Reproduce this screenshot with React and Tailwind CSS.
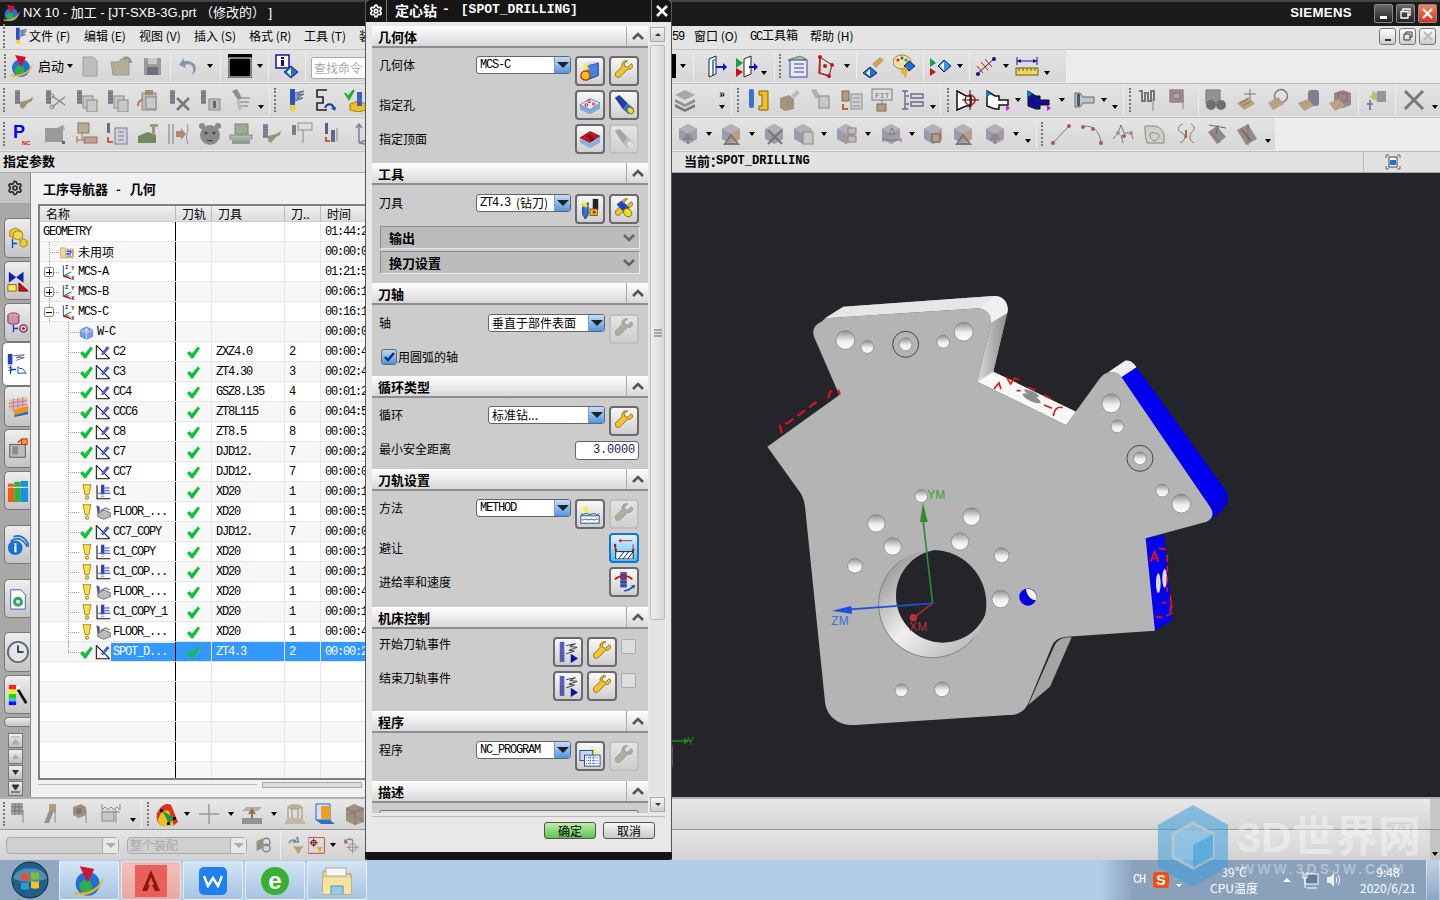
import React from 'react';
import { Settings } from 'lucide-react';

// column with flutes, used by most of the NX operation icons
const Flute = ({ x = 3, y = 2, h = 14, c = '#8d8da0' }) => (
  <g>
    <rect x={x} y={y} width="5" height={h} fill={c} />
    <path d={`M${x} ${y + 3}h5M${x} ${y + 6}h5M${x} ${y + 9}h5M${x} ${y + 12}h5`} stroke="#55556a" strokeWidth=".8" />
  </g>
);
const GrayDoc = ({ x = 12, y = 10 }) => (
  <g>
    <rect x={x} y={y} width="10" height="12" fill="#c8c8c8" stroke="#888" />
    <path d={`M${x + 2} ${y + 3}h6M${x + 2} ${y + 6}h6M${x + 2} ${y + 9}h6`} stroke="#888" />
  </g>
);
const Tree = ({ x = 12, y = 8, c = '#888' }) => (
  <g stroke={c} fill="#c4c4c4">
    <path d={`M${x} ${y}v13M${x} ${y + 5}h4M${x} ${y + 12}h4`} fill="none" />
    <rect x={x + 4} y={y + 3} width="4" height="4" />
    <rect x={x + 4} y={y + 10} width="4" height="4" />
  </g>
);
const GCube = ({ c = '#a59aa5' }) => (
  <g>
    <path d="M12 2l9 5v10l-9 5-9-5V7z" fill="#9b9ba8" />
    <path d="M12 12l9-5v10l-9 5z" fill={c} />
    <path d="M3 7l9 5 9-5-9-5z" fill="#b4aebd" />
  </g>
);
const WrenchPath = 'M20 4l-4 4-3-1-1-3 4-3c-4-1-7 2-6 6L3 14c-1 2 0 5 2 5s3-1 4-2l7-7c4 1 7-3 4-6z';

const icons = {
  nx: <><circle cx="11" cy="14" r="9" fill="#1f6fd6" /><path d="M5 14c3-4 8-4 9 1s-2 7-4 7-6-3-5-8z" fill="#2fae4a" /><path d="M5 1l11 2-5 10z" fill="#d3122c" /><path d="M1 20c8 3 18-2 22-11-1 7-8 16-22 13z" fill="#f0b020" /></>,
  doc: <path d="M5 3h10l4 4v15H5z" fill="#bdbdbd" stroke="#a0a0a0" />,
  folder: <><path d="M2 8h8l2-3h8v16H4z" fill="#b4ad98" stroke="#999" /><path d="M14 4c4-1 7 0 8 4l-3 0" stroke="#8aa07a" strokeWidth="2" fill="none" /></>,
  save: <><rect x="4" y="4" width="17" height="17" fill="#9a9a9a" /><rect x="8" y="4" width="9" height="6" fill="#c8c8c8" /><rect x="7" y="13" width="11" height="8" fill="#6f6f7f" /></>,
  undo: <path d="M7 4L2 11l7 3-1-3c5-2 9 0 8 7l-1 3c6-4 6-15-8-14z" fill="#7f97ad" />,
  colorBox: <><rect x="0" y="0" width="24" height="24" fill="#000" /><rect x="1" y="4" width="22" height="19" fill="#000" stroke="#fff" /></>,
  infoDia: <><rect x="1" y="1" width="13" height="13" fill="#fff" stroke="#1010a0" strokeWidth="1.5" /><rect x="6" y="3" width="3" height="2" fill="#1010a0" /><rect x="6" y="6" width="3" height="6" fill="#1010a0" /><path d="M16 12l7 6-7 6-7-6z" fill="#1f6fd6" stroke="#0a2a70" /><path d="M16 14l-4 4 4 4z" fill="#fff" /></>,
  colW: <><Flute /><path d="M8 14l8-2 5-3-1 4-4 2-5 6-3-2z" fill="#9a927a" /></>,
  colS: <><Flute /><path d="M9 8l13 9M9 19l13-10" stroke="#888" strokeWidth="1.5" /><circle cx="9" cy="8" r="2" fill="none" stroke="#888" /><circle cx="9" cy="19" r="2" fill="none" stroke="#888" /></>,
  colC: <><Flute /><GrayDoc x="9" y="8" /><GrayDoc x="13" y="12" /></>,
  clip: <><rect x="6" y="5" width="14" height="17" fill="#c4bca8" stroke="#888" /><rect x="9" y="2" width="8" height="5" fill="#9d8a70" /><GrayDoc x="10" y="9" /><path d="M2 18c0-4 2-6 5-6" stroke="#c07060" strokeWidth="2" fill="none" /></>,
  colX: <><Flute /><path d="M10 10l12 12M22 10L10 22" stroke="#777" strokeWidth="2.5" /></>,
  colI: <><Flute /><rect x="11" y="11" width="11" height="11" fill="#bbb" stroke="#888" /><rect x="15" y="13" width="3" height="7" fill="#666" /></>,
  torch: <><path d="M3 3l5-2 5 9-4 2z" fill="#8d8da0" /><path d="M11 10h10M11 14h9M11 18h8" stroke="#999" strokeWidth="1.5" /><path d="M9 12l2 10" stroke="#bbb" strokeWidth="3" /></>,
  colBlue: <><Flute x="8" y="1" h="16" c="#2a50c8" /><path d="M13 5l9-2-7 4 7-1-7 4 6 0-8 3" stroke="#5a6a90" fill="#90a0c0" /><path d="M7 21l4-4 4 4-4 2z" fill="#ffd020" /></>,
  sPath: <><path d="M14 2H4v7h6v6H4v7h10" fill="none" stroke="#222" strokeWidth="1.6" /><path d="M12 20c2-5 7-5 9 0" stroke="#1040a0" strokeWidth="2" fill="none" /><path d="M18 20l5-1-1 4z" fill="#1040a0" /></>,
  checkBox: <><path d="M6 16l8-3 8 3v6l-8 2-8-2z" fill="#f0c020" stroke="#a08010" /><Flute x="13" y="4" h="14" c="#4060c0" /><path d="M1 5l3 4 6-7-5 9z" stroke="#20b030" strokeWidth="2" fill="none" /></>,
  pnc: <><text x="1" y="16" fontFamily="Liberation Sans" fontWeight="700" fontSize="18" fill="#0000ff">P</text><text x="10" y="23" fontFamily="Liberation Sans" fontWeight="700" fontSize="6" fill="#e01010">NC</text></>,
  gMail: <><rect x="2" y="6" width="18" height="14" fill="#9a9a9a" /><path d="M14 6l6-3 2 4-6 2z" fill="#b09a80" /><rect x="19" y="19" width="3" height="3" fill="#666" /></>,
  gDocTree: <><rect x="4" y="1" width="11" height="10" fill="#b7ad90" stroke="#857c60" /><path d="M8 11v7" stroke="#a07060" /><rect x="10" y="15" width="13" height="6" fill="#c0a090" stroke="#a07060" /><path d="M3 14v7M3 18h7" stroke="#a07060" /></>,
  gBar: <><rect x="2" y="1" width="3" height="10" fill="#6a6a90" /><path d="M3 15v5h5" stroke="#c06040" strokeWidth="2" fill="none" /><rect x="10" y="6" width="12" height="16" fill="#d0d0d8" stroke="#7a7aa0" /><path d="M13 10h6M13 14h6M13 18h6" stroke="#7a7aa0" /></>,
  gMachine: <><path d="M2 14l10-4 8 3v8H2z" fill="#6f8a60" /><path d="M14 2h8v3h-3v8h-3V5h-2z" fill="#a09878" /></>,
  gMirror: <><path d="M2 2v20M6 2v20" stroke="#999" strokeWidth="1.5" /><path d="M9 9h5V6l5 6-5 6v-3H9z" fill="#b08a70" /><path d="M20 2c3 6-3 12 1 20" stroke="#8a90a8" fill="none" /></>,
  gBear: <><circle cx="12" cy="13" r="10" fill="#8a8a8a" /><circle cx="4" cy="4" r="3" fill="#8a8a8a" /><circle cx="20" cy="4" r="3" fill="#8a8a8a" /><circle cx="8" cy="11" r="1.5" fill="#444" /><circle cx="16" cy="11" r="1.5" fill="#444" /><path d="M9 18c2 1 4 1 6 0" stroke="#444" /></>,
  gStamp: <><rect x="6" y="2" width="13" height="10" fill="#a0aa90" stroke="#7a8a70" /><rect x="1" y="13" width="22" height="4" fill="#b5b5b5" stroke="#888" /><rect x="3" y="18" width="18" height="4" fill="#8aa090" /></>,
  gT12: <><rect x="1" y="3" width="4" height="10" fill="#7a7a90" /><rect x="7" y="1" width="14" height="7" fill="#ddd" stroke="#a08888" /><Tree x="12" y="8" /></>,
  gArr: <><rect x="3" y="1" width="3" height="11" fill="#5a5a90" /><path d="M4 15v4h4" stroke="#c06040" strokeWidth="2" fill="none" /><rect x="9" y="8" width="4" height="12" fill="#5a6a90" /><Tree x="15" y="6" /></>,
  gAxes: <path d="M6 3v18M3 6l3-4 3 4M6 21l14-6M6 21l12 2" stroke="#7a80a0" strokeWidth="1.5" fill="none" />,
  door: <><path d="M5 5l7-3v18l-7 3z" fill="#fff" stroke="#222" /><path d="M12 5l-3 2v14" stroke="#4a90e0" strokeWidth="2" fill="none" /><path d="M12 12h7V9l4 4-4 4v-3h-7z" fill="#1010d0" /></>,
  door2: <><path d="M9 5l7-3v18l-7 3z" fill="#fff" stroke="#222" /><path d="M14 12h5V9l4 4-4 4v-3h-5z" fill="#1010d0" /><path d="M1 4l7 5-7 5z" fill="#10a040" /><path d="M1 14l7 4-7 5z" fill="#d01010" /></>,
  listDoc: <><path d="M4 6l12-4 6 3-12 4z" fill="#a0c8a0" stroke="#608060" /><rect x="6" y="6" width="17" height="17" fill="#e8e8ff" stroke="#4040a0" /><path d="M10 10h10M10 14h10M10 18h10" stroke="#4040a0" /></>,
  netCube: <><path d="M6 3l12 8-3 11-9-3z" fill="none" stroke="#333" /><path d="M6 3l-1 16 10 3" fill="none" stroke="#c02020" strokeWidth="1.5" /><circle cx="6" cy="3" r="2" fill="#d01010" /><circle cx="18" cy="11" r="2" fill="#d01010" /><circle cx="15" cy="22" r="2" fill="#d01010" /><circle cx="11" cy="12" r="2" fill="#d01010" /></>,
  handDia: <><path d="M10 10l8-7 4 3-8 8z" fill="#d0a060" /><path d="M8 13l7 6-7 5-7-5z" fill="#1f6fd6" stroke="#0a2a70" /><path d="M8 15l-4 4 4 3z" fill="#fff" /></>,
  palette: <><ellipse cx="9" cy="8" rx="9" ry="7" fill="#f0e0a0" stroke="#a08040" /><circle cx="5" cy="6" r="1.5" fill="#d02020" /><circle cx="9" cy="4" r="1.5" fill="#2060d0" /><circle cx="13" cy="6" r="1.5" fill="#20a040" /><path d="M16 7l6 5-6 5-5-5z" fill="#1f6fd6" stroke="#0a2a70" /><path d="M10 20c-2-3 0-6 3-5l-1 8" stroke="#e0b020" strokeWidth="2.5" fill="none" /></>,
  triDia: <><path d="M16 6l7 6-7 6-6-6z" fill="#4a8fe0" stroke="#0a2a70" /><path d="M16 8l-4 4 4 4z" fill="#fff" /><path d="M2 4l6 5-6 4z" fill="#10a040" /><path d="M2 14l6 4-6 4z" fill="#d01010" /></>,
  hatch: <><path d="M2 21L21 4" stroke="#333" /><path d="M3 12l6 7M7 8l7 8M11 5l7 8" stroke="#d01010" /><circle cx="4" cy="20" r="2" fill="#1010a0" /><circle cx="20" cy="5" r="2" fill="#1010a0" /></>,
  ruler: <><path d="M2 3v8M22 3v8M2 7h20" stroke="#1010a0" /><path d="M2 7l4-2v4zM22 7l-4-2v4z" fill="#1010a0" /><rect x="1" y="14" width="22" height="7" fill="#f0d860" stroke="#705810" /><path d="M4 14v3M8 14v3M12 14v3M16 14v3M20 14v3" stroke="#705810" /></>,
  gStack: <><path d="M2 7l10-5 10 5-10 5z" fill="#a8a8a8" /><path d="M2 11l10 5 10-5v3l-10 5-10-5z" fill="#8f8f8f" /><path d="M2 16l10 5 10-5v3l-10 5-10-5z" fill="#7a7a7a" /></>,
  toolY: <><rect x="3" y="1" width="5" height="19" rx="2" fill="#3a70d0" /><path d="M13 3h9v19h-9v-4h3V7h-3z" fill="#f0c020" stroke="#806010" /></>,
  gBoxCyl: <><path d="M3 10l9-3 5 4v10l-9 2-5-3z" fill="#a09580" /><path d="M14 8l6-6 3 3-6 5z" fill="#bbb" /></>,
  gTorchDoc: <><path d="M3 2l5-1 4 7-4 3z" fill="#b5b0a0" /><GrayDoc x="11" y="8" /></>,
  gBoxDoc: <><rect x="3" y="3" width="7" height="10" fill="#b09a80" stroke="#806a50" /><rect x="12" y="6" width="11" height="15" fill="#d0d0d0" stroke="#8a8a9a" /><path d="M14 10h7M14 14h7M14 18h7" stroke="#8a8a9a" /><path d="M4 16v5h5" stroke="#c06040" strokeWidth="2" fill="none" /></>,
  gFit: <><rect x="2" y="1" width="20" height="11" fill="#ddd" stroke="#7a7a90" /><text x="5" y="10" fontFamily="Liberation Mono" fontSize="8" fill="#6a6a8a">FIT</text><path d="M12 12v4" stroke="#a07060" /><rect x="7" y="16" width="9" height="7" fill="#b09a80" stroke="#806a50" /></>,
  gLadder: <path d="M4 3v18M1 3h6M1 21h6M10 6h12v4H10zM10 14h12v4H10zM5 8h3M5 16h3" stroke="#6a6a90" strokeWidth="1.4" fill="none" />,
  target: <><path d="M1 3l9 5h5v10h-5l-9 4z" fill="#fff" stroke="#111" strokeWidth="1.5" /><circle cx="14" cy="12" r="5" fill="none" stroke="#d01010" strokeWidth="1.5" /><path d="M6 12h17M14 2v20" stroke="#111" /></>,
  holder: <><path d="M1 3l8 5h4v4h9v5h-9v4H9l-8-3z" fill="#fff" stroke="#111" strokeWidth="1.5" /><path d="M0 2l5 4-5 4z" fill="#0a80c0" /><path d="M20 17l4 3-4 3z" fill="#c020c0" /></>,
  holderB: <><path d="M1 3l8 5h4v4h9v5h-9v4H9l-8-3z" fill="#10108a" stroke="#111" /><path d="M0 2l5 4-5 4z" fill="#0a80c0" /><path d="M20 17l4 3-4 3z" fill="#c020c0" /></>,
  cylS: <><path d="M3 5h5l3 4h11v6H11l-3 4H3z" fill="#b8c8c8" stroke="#667" /><rect x="5" y="6" width="3" height="12" fill="#556" /></>,
  gT1: <><path d="M1 3h3v10h3V5h3v8h3V3h3v10" stroke="#7a7080" strokeWidth="2" fill="none" /><Tree x="15" y="10" /></>,
  gT2: <><rect x="1" y="2" width="13" height="12" fill="#a09898" stroke="#806060" /><rect x="4" y="5" width="7" height="6" fill="#b8a0a0" stroke="#906060" /><Tree x="14" y="8" /></>,
  gBino: <><rect x="2" y="2" width="14" height="13" fill="#9a9090" stroke="#776" /><circle cx="7" cy="17" r="5" fill="#707070" /><circle cx="17" cy="17" r="5" fill="#707070" /></>,
  gPlus: <><path d="M15 1v11M9 6h12" stroke="#777" /><path d="M2 15l12-6 6 7-11 6z" fill="#b8a080" /><path d="M5 15l8-4M7 18l8-4" stroke="#8a7050" /></>,
  gRing: <><circle cx="15" cy="8" r="6.5" fill="none" stroke="#777" strokeWidth="1.4" /><path d="M2 15l10-6 6 7-11 6z" fill="#b8a080" /></>,
  gCyl: <><rect x="11" y="2" width="11" height="16" rx="3" fill="#7a8090" /><path d="M1 15l10-4 6 7-10 5z" fill="#b8a080" /></>,
  gBx: <><path d="M6 5l9-3 8 3v12l-8 3-9-3z" fill="#9a8888" /><rect x="10" y="5" width="9" height="8" fill="none" stroke="#a06060" /><path d="M1 15l10-4 6 7-10 5z" fill="#b8a080" /></>,
  gSpark: <><path d="M8 2l2 3 3-1-1 3 3 2-3 1v3l-3-2-2 2v-3L4 9l3-2z" fill="#c0c060" /><rect x="12" y="3" width="9" height="11" fill="#9a94a0" /><path d="M5 12v10M2 16h6" stroke="#7a80a0" strokeWidth="2" /></>,
  gX: <path d="M3 3l18 18M21 3L3 21" stroke="#777" strokeWidth="3" />,
  cubeMove: <><GCube /><path d="M12 12v10M7 17h10M12 12l-3 3M12 12l3 3" stroke="#888" strokeWidth="2" /></>,
  cubeTri: <><GCube c="#c09a80" /><path d="M12 13l7 9H6z" fill="none" stroke="#777" strokeWidth="2" /></>,
  cubeX: <><GCube /><path d="M6 8l14 14M20 8L6 22" stroke="#777" strokeWidth="2" /></>,
  cubeDoc: <><GCube c="#c0a890" /><GrayDoc x="12" y="10" /></>,
  cubeSq: <><GCube c="#c09a80" /><rect x="14" y="6" width="8" height="6" fill="#bbb" stroke="#888" /><rect x="14" y="14" width="8" height="6" fill="#bbb" stroke="#888" /></>,
  cubeH: <><GCube /><path d="M4 18h18M4 16v4M22 16v4M13 6l-3 6h6z" stroke="#777" fill="none" /></>,
  cubeF: <><GCube c="#c09a80" /><rect x="11" y="12" width="8" height="8" fill="none" stroke="#777" strokeWidth="1.5" /></>,
  line: <><path d="M4 21L20 4" stroke="#777" /><circle cx="4" cy="21" r="2" fill="#a06060" /><circle cx="20" cy="4" r="2" fill="#a06060" /></>,
  arcL: <><path d="M3 5c9-3 17 4 18 16" stroke="#777" fill="none" /><circle cx="3" cy="5" r="2" fill="#a06060" /><circle cx="13" cy="7" r="2" fill="#a06060" /><circle cx="21" cy="21" r="2" fill="#a06060" /></>,
  spline: <><path d="M2 17l5-6 3-8 3 8 7 0 2 6M10 13l2 8" stroke="#777" fill="none" /><circle cx="7" cy="11" r="2" fill="#a09090" /><circle cx="13" cy="14" r="2" fill="#a06060" /><circle cx="20" cy="11" r="2" fill="#a09090" /></>,
  heart: <path d="M3 4h9c5 0 10 5 10 10v7H5c-2-6-2-12-2-17zM8 12c3-3 5-1 5 0 1-1 4-1 4 2s-4 5-5 5-5-4-4-7z" fill="#d0d0d0" stroke="#886" />,
  curveA: <><path d="M10 2C4 4 4 9 9 11c5 2 3 8-2 10M18 2c4 2 4 6 1 8s-3 9 2 11" stroke="#777" fill="none" /><path d="M13 8v8" stroke="#b06040" strokeWidth="2" /></>,
  sheet: <><path d="M4 10l9-6 9 11-9 7z" fill="#8a8a8a" /><path d="M5 3l17 3M14 3l-2 9" stroke="#666" /><path d="M8 12l8 9" stroke="#c06040" /></>,
  sheet2: <><path d="M2 8l11-6 9 15-11 6z" fill="#8e8e8e" /><path d="M13 2v21" stroke="#777" /><path d="M6 7l10 12" stroke="#b05040" strokeWidth="1.5" /></>,
  gFam1: <><rect x="1" y="1" width="12" height="12" fill="#a0a0a8" /><path d="M1 5h12M1 9h12M5 1v12M9 1v12" stroke="#777" /><Tree x="13" y="8" /></>,
  gFam2: <><rect x="8" y="2" width="7" height="8" fill="#b09a80" /><path d="M3 21l5-12h5l-5 12z" fill="#90909a" /><Tree x="14" y="8" /></>,
  gFam3: <><path d="M1 5l8-3 5 3v8l-7 3-6-3z" fill="#a09080" /><circle cx="7" cy="9" r="3" fill="#777" /><Tree x="14" y="8" /></>,
  gFam4: <><path d="M1 2v6l3-3 3 3 3-3 3 3 3-3 3 3V2M1 10h18" stroke="#888" fill="none" /><rect x="1" y="10" width="12" height="9" fill="#c8c8c8" stroke="#888" /><Tree x="15" y="8" /></>,
  rainbow: <><path d="M2 11C7 1 13 1 16 3l7 17-5 4H8C2 23 1 16 2 11z" fill="#e03020" /><path d="M3 17C7 8 11 8 14 9l5 15H8c-4-1-5-4-5-7z" fill="#f0c020" /><path d="M7 8l12 8-5 6z" fill="#10a040" /><rect x="5" y="7" width="3" height="3" fill="#111" /><rect x="18" y="15" width="3" height="3" fill="#111" /><rect x="12" y="20" width="3" height="3" fill="#111" /></>,
  gPlusBig: <path d="M12 2v20M2 12h20" stroke="#999" strokeWidth="1.5" />,
  gArrowPlate: <><path d="M6 5h16l-4 4H2z" fill="#b8b098" /><path d="M12 16v-7M9 12l3-4 3 4" stroke="#8a7050" strokeWidth="2" fill="none" /><path d="M2 16h20v6H2z" fill="#8f939a" /></>,
  gDrum: <><ellipse cx="12" cy="5" rx="7" ry="3" fill="#b8b098" /><path d="M5 5v13M19 5v13M9 6v12M15 6v12" stroke="#9a8a70" /><path d="M1 22l4-6h14l4 6z" fill="#c0b8a0" /></>,
  blueCube: <><path d="M3 2h14v16H3z" fill="#d0e4ff" stroke="#2a60c0" /><path d="M8 4h9v13H8z" fill="#f0a020" /><path d="M3 18h14l5 4H8z" fill="#2a70d0" /></>,
  gCubeBig: <><path d="M3 6l8-4 10 4v14l-9 3-9-4z" fill="#a09080" /><path d="M3 6l9 4 9-4M12 10v13M3 13l18-6M3 6l18 14" stroke="#877" fill="none" /></>,
  gChain: <><path d="M2 7l8-4v13l-8 4z" fill="#998f80" /><circle cx="15" cy="8" r="5" fill="none" stroke="#888" strokeWidth="2" /><circle cx="15" cy="16" r="5" fill="none" stroke="#888" strokeWidth="2" /></>,
  gFunnel: <><path d="M8 14h14l-5 6v3h-4v-3z" fill="#b8a070" /><path d="M3 10c0-4 4-6 8-4l-2 2 6 0-1-6-2 2" stroke="#789" fill="none" strokeWidth="2" /></>,
  redFilter: <><rect x="0" y="1" width="23" height="22" fill="none" stroke="#d01020" /><circle cx="8" cy="8" r="3.5" fill="none" stroke="#a01020" strokeWidth="1.5" /><path d="M8 2v12M2 8h12" stroke="#441020" /><path d="M12 14h9l-3 4v4h-3v-4z" fill="#e0b020" /></>,
  gUndoT: <><path d="M4 8c3-5 9-5 11-1" stroke="#888" strokeWidth="2" fill="none" /><path d="M3 4v6h6z" fill="#777" /><circle cx="14" cy="15" r="5" fill="none" stroke="#a07070" /><path d="M14 7v16M6 15h16" stroke="#a07070" /></>,
  // dialog button icons
  dCube: <><path d="M8 6l13-3v14l-13 5z" fill="#4a80e0" stroke="#103080" /><path d="M8 6L3 4l13-3 5 2z" fill="#d0e0ff" /><path d="M6 3l2 3 3-1-2 3 3 2-3 0v3l-2-3-3 1 2-3-3-2 3 0z" fill="#ffee30" /><circle cx="7" cy="17" r="5" fill="#f0c020" stroke="#c03010" strokeWidth="1.4" /></>,
  dWrench: <path d={WrenchPath} fill="#f4c430" stroke="#8a6a10" />,
  dWrenchG: <path d={WrenchPath} fill="#b0ae9e" stroke="#989688" />,
  dHoles: <><path d="M1 12l11-7 11 5-11 7z" fill="#e8e8f8" stroke="#6080a0" /><path d="M1 12v5l11 5 11-6v-6l-11 7z" fill="#80a8d8" /><circle cx="11" cy="8" r="1.5" fill="none" stroke="#d01010" /><circle cx="8" cy="12" r="1.5" fill="none" stroke="#d01010" /><circle cx="16" cy="11" r="1.5" fill="none" stroke="#d01010" /></>,
  dTorch: <><path d="M2 4l5-3 9 9-5 7z" fill="#2040a0" /><path d="M16 10l-5 7 6 5 6-6z" fill="#3a70d0" /><ellipse cx="19" cy="18" rx="3" ry="4" transform="rotate(-45 19 18)" fill="#f0e020" stroke="#806a10" /></>,
  dTop: <><path d="M1 11l11-7 11 5-11 7z" fill="#d01020" stroke="#701020" /><path d="M1 11v5l11 6 11-6v-7l-11 7z" fill="#8ab0e0" /><circle cx="11" cy="9" r="1.5" fill="none" stroke="#400" /><circle cx="14" cy="12" r="1.5" fill="none" stroke="#400" /></>,
  dTorchG: <><path d="M2 3l5-2 9 9-5 7z" fill="#a4a4ac" /><path d="M16 10l-5 7 6 5 6-6z" fill="#b8b8c0" /><ellipse cx="19" cy="18" rx="3" ry="4" transform="rotate(-45 19 18)" fill="#e0e0d0" /></>,
  dTool: <><path d="M4 8l6-3 0 13-3 5-3-5z" fill="#3a70d0" stroke="#103080" /><path d="M5 2l2 3 3-1-2 3 3 2-3 0v3L6 9 3 10l2-3-3-2 3 0z" fill="#ffee30" /><rect x="15" y="1" width="6" height="12" fill="#222" /><rect x="12" y="12" width="8" height="7" fill="#f0c020" stroke="#805010" /><rect x="15" y="14" width="3" height="3" fill="#c02020" /></>,
  dWrenchT: <><path d={WrenchPath} fill="#f4c430" stroke="#8a6a10" /><path d="M4 7l5-4 9 8-5 6z" fill="#1a48c0" /><ellipse cx="16" cy="16" rx="4" ry="5" transform="rotate(-45 16 16)" fill="#f0e020" stroke="#806a10" /></>,
  dWave: <><path d="M6 2l2 3 3-1-2 3 3 2-3 0v3L7 9 4 10l2-3-3-2 3 0z" fill="#ffee30" /><path d="M2 12c3 2 5-2 8 0s5-2 8 0 3 0 4-1" stroke="#1a4a90" fill="none" /><rect x="2" y="14" width="20" height="8" fill="#fff" stroke="#1a4a90" /><path d="M3 18c3 2 3-2 6 0s3-2 6 0 3-2 6 0" stroke="#1a4a90" fill="none" /></>,
  dAvoid: <><path d="M1 8h2v8M22 8v8M6 4h15" stroke="#d01010" /><path d="M6 4l3-2v4zM3 16l-2-3h4zM22 16l-2-3h4z" fill="#d01010" /><rect x="3" y="16" width="19" height="8" fill="#fff" stroke="#112" /><path d="M6 24l6-8M11 24l6-8M16 24l6-8" stroke="#112" /></>,
  dFeed: <><rect x="8" y="1" width="7" height="17" fill="#5060c8" /><path d="M8 4h7M8 8h7M8 12h7M8 16h7" stroke="#334" /><path d="M2 9c6-5 14-5 19 0" stroke="#d01010" fill="none" strokeWidth="2" /><path d="M12 21c3 0 6-2 9-4l-2-1 5-1-1 5-1-2c-3 3-7 5-10 4z" fill="#1a48c0" /></>,
  dEvent: <><Flute x="3" y="1" h="22" c="#5060c8" /><path d="M10 5l10-2-6 3 8 1-9 3 6 1-9 3" stroke="#333" fill="none" /><path d="M15 14l8 5-8 5z" fill="#1010a0" /></>,
  dProg: <><path d="M14 2l2 3 3-1-2 3 3 2-3 0v3l-2-3-3 1 2-3-3-2 3 0z" fill="#ffee30" /><rect x="1" y="6" width="14" height="11" fill="#c8d8ff" stroke="#2040a0" /><rect x="6" y="11" width="17" height="12" fill="#fff" stroke="#2040a0" /><path d="M8 14h13M8 17h13M8 20h13M12 12v10M16 12v10" stroke="#2040a0" strokeDasharray="1 1" /></>,
  // tree icons
  check: <path d="M0 13l5-4 4 5L20 1l4 3L11 23H8z" fill="#12c040" />,
  warn: <><path d="M6 1h12l-3 15H9z" fill="#f7e040" stroke="#806010" /><circle cx="12" cy="20.5" r="2.6" fill="#f7e040" stroke="#806010" /></>,
  op: <><path d="M2 2v20h20M2 2l14 14 6 6" stroke="#111" strokeWidth="1.6" fill="none" /><path d="M9 15l9-12 4 3-10 11z" fill="#4a60d0" /></>,
  op1: <><path d="M3 2v20h20" stroke="#111" strokeWidth="1.6" fill="none" /><Flute x="9" y="1" h="13" c="#3040d0" /><path d="M14 6h8M14 10h8M5 14h18" stroke="#3040d0" strokeWidth="1.6" /></>,
  floor: <><path d="M2 2l5 2v10l-3 1z" fill="#4a50b0" /><path d="M4 14l10-5 9 4v6l-10 4-9-4z" fill="#bbb" stroke="#444" /><path d="M8 10l8-4 6 3" stroke="#777" fill="none" strokeWidth="2" /></>,
  unused: <><path d="M1 5h8l2 2h12v15H1z" fill="#f0dc90" stroke="#a08a40" /><rect x="10" y="9" width="11" height="11" fill="#fff" stroke="#777" /><path d="M12 11h7v3h-7v3h7" stroke="#1010c0" strokeWidth="1.5" fill="none" /></>,
  mcs: <><path d="M5 2v16M5 18h9" stroke="#1040c0" strokeWidth="1.4" /><path d="M5 18l12-6" stroke="#10a030" strokeWidth="1.6" /><path d="M5 18l12 4" stroke="#d01010" strokeWidth="2" /><text x="8" y="8" fontFamily="Liberation Sans" fontWeight="700" fontSize="7" fill="#111">Z</text><text x="17" y="9" fontFamily="Liberation Sans" fontWeight="700" fontSize="7" fill="#111">Y</text><text x="17" y="24" fontFamily="Liberation Sans" fontWeight="700" fontSize="7" fill="#111">X</text></>,
  wc: <><path d="M2 8l10-5 10 5v10l-10 5-10-5z" fill="#7a9ae8" stroke="#5070c0" /><path d="M2 8l10 5 10-5" stroke="#fff" fill="none" /><path d="M12 13v10" stroke="#fff" /><circle cx="12" cy="8" r="3" fill="#c8d8ff" /></>,
  // strip tabs
  tGeom: <><path d="M3 4l6-3 6 3v6l-6 3-6-3zM13 2h0" fill="#f0c830" stroke="#a08010" /><path d="M7 6l5-2 5 2v6l-5 2-5-2z" fill="#f5d850" stroke="#a08010" /><path d="M6 13v10M6 18h5" stroke="#1040c0" strokeWidth="1.4" /><path d="M14 15l4-2 4 2v5l-4 2-4-2z" fill="#f0c830" stroke="#a08010" /></>,
  tMach: <><path d="M2 2l8 6 8-6v12l-8-6-8 6z" fill="#0a20b0" /><rect x="1" y="16" width="9" height="7" fill="#f5f060" stroke="#806010" /><path d="M13 14l10 9H13z" fill="#d01010" stroke="#600" /></>,
  tPart: <><ellipse cx="7" cy="4" rx="6" ry="3" fill="#e0a0c0" stroke="#802050" /><path d="M1 4v7c0 3 12 3 12 0V4" fill="#d090b0" stroke="#802050" /><path d="M7 14v8M7 18h5" stroke="#1040c0" strokeWidth="1.4" /><circle cx="18" cy="18" r="4" fill="none" stroke="#802050" strokeWidth="1.4" /><circle cx="18" cy="18" r="1.5" fill="#802050" /></>,
  tOp: <><Flute x="2" y="1" h="11" c="#1a48c0" /><path d="M8 3l12-1-9 3 9 0-9 3" stroke="#5a6a90" fill="none" /><path d="M5 14v9M5 18h6" stroke="#1040c0" strokeWidth="1.4" /><path d="M13 15v7h9l-4-5h-3z" fill="none" stroke="#1040c0" /></>,
  tSheet: <><path d="M2 4l20-3v13L2 17z" fill="#e8c090" /><path d="M2 8l20-3M2 12l20-3M7 3v14M12 2v14M17 1v14" stroke="#b070d0" /><path d="M8 15l15-4v8l-15 4z" fill="#f09020" /><path d="M8 21l15-4v3l-15 3z" fill="#1a70d0" /></>,
  tCam: <><rect x="3" y="7" width="17" height="14" fill="#bbb" stroke="#555" /><rect x="6" y="9" width="6" height="9" fill="#889" /><path d="M12 5c3-4 6-4 9-3" stroke="#e05010" strokeWidth="2" fill="none" /><rect x="16" y="1" width="6" height="6" fill="#e8a030" stroke="#c02020" /></>,
  tBooks: <><rect x="1" y="4" width="7" height="20" fill="#e86010" /><rect x="8" y="2" width="7" height="22" fill="#30b040" /><rect x="15" y="1" width="8" height="23" fill="#1a90e0" /><path d="M1 8h7M8 8h7M15 8h8" stroke="#fff" /></>,
  tInfo: <><path d="M4 8c7-6 14-2 18 6M7 3c8-3 15 2 17 11" stroke="#1a70d0" strokeWidth="2" fill="none" /><circle cx="9" cy="15" r="8" fill="#1a70d0" /><rect x="8" y="10" width="2.4" height="2.4" fill="#fff" /><rect x="8" y="13" width="2.4" height="7" fill="#fff" /></>,
  tWeb: <><path d="M4 2h11l5 5v16H4z" fill="#fff" stroke="#2a60c0" /><circle cx="12" cy="15" r="5.5" fill="#40a060" /><circle cx="12" cy="15" r="2.2" fill="#d8e8ff" /></>,
  tClock: <><circle cx="12" cy="12" r="11" fill="#dfe6f0" stroke="#666" strokeWidth="2" /><path d="M12 5v7h6" stroke="#111" strokeWidth="1.6" fill="none" /></>,
  tGrad: <><rect x="2" y="1" width="8" height="5" fill="#ff2020" /><rect x="2" y="6" width="8" height="5" fill="#f0f020" /><rect x="2" y="11" width="8" height="5" fill="#20d020" /><rect x="2" y="16" width="8" height="3" fill="#20d0f0" /><rect x="2" y="19" width="8" height="4" fill="#1010ff" /><path d="M12 6l9 15" stroke="#111" strokeWidth="3" /><circle cx="12" cy="4" r="2" fill="#fff" /></>,
};

const Ico = ({ n, s = 24 }) => (
  <svg width={s} height={s} viewBox="0 0 24 24" className="shrink-0">{icons[n]}</svg>
);

// toolbar cell, 31px unless told otherwise
const T = ({ n, w = 'w-[31px]', s = 24 }) => (
  <div className={`${w} h-full flex items-center justify-center shrink-0`}>
    <Ico n={n} s={s} />
  </div>
);
const Tri = () => <div className="w-0 h-0 border-x-[3.5px] border-x-transparent border-t-[4px] border-t-black" />;
const Drop = ({ w = 'w-[10px]', low }) => (
  <div className={`${w} h-full flex justify-center shrink-0 ${low ? 'items-end pb-[7px]' : 'items-center'}`}>
    <Tri />
  </div>
);
const Sep = ({ w = 'w-[6px]' }) => (
  <div className={`${w} h-full flex justify-center items-center shrink-0`}>
    <div className="w-[1px] h-[30px] bg-[#aaaaaa] border-r border-white/80" />
  </div>
);
const Grip = ({ w = 'w-[8px]' }) => (
  <div className={`${w} h-full flex justify-center items-center shrink-0`}>
    <div className="h-[24px] w-[2px] border-l-2 border-dotted border-[#777777]" />
  </div>
);
const ToolRow = ({ left, right, end = 'flex-1' }) => (
  <div className="h-[34px] flex items-start bg-[#ececec] border-b border-[#bdbdbd] shrink-0">
    <div className="w-[672px] h-[32px] flex overflow-hidden bg-gradient-to-b from-[#e4e4e4] to-[#d6d6d6] shrink-0">{left}</div>
    <div className={`h-[32px] flex ${end} overflow-hidden bg-gradient-to-b from-[#e4e4e4] to-[#d6d6d6]`}>{right}</div>
    {end !== 'flex-1' && <div className="flex-1" />}
  </div>
);
const run = (list) => list.map((n, i) => <T key={i} n={n} />);

const MenuItem = ({ t, w = 'w-[55px]' }) => <div className={`${w} shrink-0 text-[12px] whitespace-nowrap`}>{t}</div>;
const TitleBtn = ({ children, c = 'bg-gradient-to-b from-[#6a6a6a] to-[#222222]' }) => (
  <div className={`w-[19px] h-[19px] rounded-[2px] border border-[#888888] ${c} flex items-center justify-center text-white`}>{children}</div>
);
const SmallBtn = ({ children, off }) => (
  <div className={`w-[17px] h-[17px] rounded-[3px] border border-[#777777] bg-gradient-to-b from-white to-[#cccccc] flex items-center justify-center ${off ? 'text-[#bbbbbb]' : 'text-[#333333]'}`}>{children}</div>
);

const ops = [
  ['C2', 'ok', 'op', 'ZXZ4.0', '2', '00:00:4'],
  ['C3', 'ok', 'op', 'ZT4.30', '3', '00:02:4'],
  ['CC4', 'ok', 'op', 'GSZ8.L35', '4', '00:01:2'],
  ['CCC6', 'ok', 'op', 'ZT8L115', '6', '00:04:5'],
  ['C8', 'ok', 'op', 'ZT8.5', '8', '00:00:3'],
  ['C7', 'ok', 'op', 'DJD12.', '7', '00:00:2'],
  ['CC7', 'ok', 'op', 'DJD12.', '7', '00:00:0'],
  ['C1', 'warn', 'op1', 'XD20', '1', '00:00:1'],
  ['FLOOR_...', 'warn', 'floor', 'XD20', '1', '00:00:5'],
  ['CC7_COPY', 'ok', 'op', 'DJD12.', '7', '00:00:0'],
  ['C1_COPY', 'warn', 'op1', 'XD20', '1', '00:00:1'],
  ['C1_COP...', 'warn', 'op1', 'XD20', '1', '00:00:1'],
  ['FLOOR_...', 'warn', 'floor', 'XD20', '1', '00:00:4'],
  ['C1_COPY_1', 'warn', 'op1', 'XD20', '1', '00:00:1'],
  ['FLOOR_...', 'warn', 'floor', 'XD20', '1', '00:00:4'],
  ['SPOT_D...', 'ok', 'op', 'ZT4.3', '2', '00:00:2'],
];

const Mono = ({ children, className = '', t = 'tracking-[-1.2px]' }) => (
  <span className={`font-['Liberation_Mono','Noto_Sans_CJK_SC',monospace] text-[12px] ${t} whitespace-nowrap ${className}`}>{children}</span>
);

const Expander = ({ minus }) => (
  <span className="relative z-10 w-[10px] h-[10px] rounded-[2px] border border-[#888888] bg-white flex items-center justify-center shrink-0">
    <span className="w-[6px] h-[1px] bg-black" />
    {!minus && <span className="absolute w-[1px] h-[6px] bg-black" />}
  </span>
);

const NavRow = ({ idx, name, head, status, op, tool, num, time, sel }) => {
  const bg = sel ? 'bg-[#3399ff] text-white' : '';
  const tree = head || op;
  return (
    <div className={`h-[20px] flex border-b border-[#e6e6e6] ${idx % 2 ? 'bg-[#f7f7f7]' : 'bg-white'}`}>
      <div className="relative w-[136px] h-full flex items-center border-r border-black pt-[1px] shrink-0">
        {tree && idx >= 1 && idx <= 4 && <span className="absolute left-[9px] top-0 h-full border-l border-dotted border-[#999999]" />}
        {tree && idx >= 1 && idx <= 4 && <span className="absolute left-[9px] top-[10px] w-[10px] border-t border-dotted border-[#999999]" />}
        {tree && idx >= 5 && <span className={`absolute left-[28px] top-0 border-l border-dotted border-[#999999] ${sel ? 'h-[10px]' : 'h-full'}`} />}
        {tree && idx >= 5 && <span className="absolute left-[28px] top-[10px] w-[11px] border-t border-dotted border-[#999999]" />}
        {head}
        {op && (
          <>
            <span className="relative w-[13px] ml-[40px] flex justify-center shrink-0">
              <Ico n={status === 'ok' ? 'check' : 'warn'} s={status === 'ok' ? 13 : 16} />
            </span>
            <span className="ml-[2px] shrink-0"><Ico n={op} s={16} /></span>
            <span className={`h-full flex items-center flex-1 pl-[2px] ${sel ? 'bg-[#3399ff] text-white' : ''}`}>
              <Mono>{name}</Mono>
            </span>
          </>
        )}
      </div>
      <div className={`w-[36px] h-full flex items-center justify-center border-r border-[#e6e6e6] pt-[1px] shrink-0 ${bg}`}>{op && <Ico n="check" s={13} />}</div>
      <div className={`w-[73px] h-full flex items-center pl-[4px] border-r border-[#e6e6e6] pt-[1px] shrink-0 ${bg}`}><Mono>{tool}</Mono></div>
      <div className={`w-[36px] h-full flex items-center pl-[4px] border-r border-[#e6e6e6] pt-[1px] shrink-0 ${bg}`}><Mono>{num}</Mono></div>
      <div className={`flex-1 h-full flex items-center pl-[4px] pt-[1px] ${bg}`}><Mono>{time}</Mono></div>
    </div>
  );
};

const McsHead = ({ label, minus }) => (
  <span className="flex items-center pl-[4px]">
    <Expander minus={minus} />
    <span className="ml-[6px]"><Ico n="mcs" s={16} /></span>
    <Mono className="ml-[2px]">{label}</Mono>
  </span>
);

const navRows = [
  { head: <Mono className="pl-[3px]">GEOMETRY</Mono>, time: '01:44:2' },
  { head: <span className="flex items-center pl-[20px]"><Ico n="unused" s={14} /><span className="ml-[4px] text-[12px]">未用项</span></span>, time: '00:00:0' },
  { head: <McsHead label="MCS-A" />, time: '01:21:5' },
  { head: <McsHead label="MCS-B" />, time: '00:06:1' },
  { head: <McsHead label="MCS-C" minus />, time: '00:16:1' },
  { head: <span className="flex items-center pl-[39px]"><Ico n="wc" s={15} /><Mono className="ml-[3px]">W-C</Mono></span>, time: '00:00:0' },
];

// left vertical resource bar
const Tab = ({ n, h = 'h-[40px]', active }) => (
  <div className={`${h} shrink-0 flex items-center justify-center border border-[#777777] border-r-0 rounded-l-[5px] ${active ? 'w-[28px] ml-[2px] bg-white' : 'w-[26px] ml-[4px] bg-gradient-to-b from-[#eeeeee] to-[#c4c4c4]'}`}>
    {n && <Ico n={n} s={22} />}
  </div>
);
const PageBtn = ({ children }) => (
  <div className="w-[15px] h-[15px] border border-[#777777] bg-gradient-to-b from-[#f0f0f0] to-[#c0c0c0] flex items-center justify-center text-[#333333] ml-[8px]">{children}</div>
);

// dialog pieces
const Chevron = ({ down, c = '#555555' }) => (
  <svg width="12" height="8" viewBox="0 0 12 8">
    <path d={down ? 'M1 1l5 5 5-5' : 'M1 7l5-5 5 5'} fill="none" stroke={c} strokeWidth="2.6" />
  </svg>
);
const Section = ({ title, h, children }) => (
  <div className="shrink-0">
    <div className="h-[22px] flex items-center bg-gradient-to-b from-white to-[#d8d8d8] border-b-2 border-[#8e8e8e]">
      <div className="flex-1 pl-[6px] pt-[2px] text-[13px] font-bold">{title}</div>
      <div className="w-[22px] h-full flex items-center justify-center border-l border-[#aaaaaa]"><Chevron /></div>
    </div>
    <div className={`${h} bg-[#cccccc] pl-[7px] pr-[9px] overflow-hidden`}>{children}</div>
  </div>
);
const Combo = ({ value, mono, w = 'w-[95px]' }) => (
  <div className={`${w} h-[18px] flex bg-white border border-[#666666] rounded-[3px] overflow-hidden shrink-0`}>
    <div className="flex-1 min-w-0 pl-[3px] flex items-center overflow-hidden whitespace-nowrap text-[12px]">
      {mono ? <Mono>{value}</Mono> : value}
    </div>
    <div className="w-[16px] h-full flex items-center justify-center bg-gradient-to-b from-[#c8dcf4] to-[#4f94e4] border-l border-[#7a9cc8]">
      <div className="w-0 h-0 border-x-[6px] border-x-transparent border-t-[6px] border-t-[#222222]" />
    </div>
  </div>
);
const Btn = ({ n, off, blue, h = 'h-[30px]' }) => (
  <div className={`w-[30px] ${h} rounded-[4px] flex items-center justify-center shrink-0 border-2 ${
    blue ? 'border-[#1f70c8] bg-gradient-to-b from-[#e0f4ff] to-[#40c0f4]'
      : off ? 'border-[#c0c0c0] bg-gradient-to-b from-[#e4e4e4] to-[#cfcfcf]'
      : 'border-[#6a6a6a] bg-gradient-to-b from-[#f8f8f8] to-[#cfcfcf]'}`}>
    <Ico n={n} s={22} />
  </div>
);
const Label = ({ t, center, tight }) => (
  <div className={`flex-1 text-[12px] ${tight ? 'leading-[14px]' : 'leading-[18px]'} ${center ? 'mt-[6px]' : ''}`}>{t}</div>
);
const SubHead = ({ t }) => (
  <div className="h-[23px] mt-[2px] flex items-center justify-between bg-[#bcbcbc] border border-[#8c8c8c] border-b-[#e8e8e8] border-r-[#e8e8e8] pl-[8px] pr-[4px] -mr-[1px] ml-[1px]">
    <span className="text-[13px] font-bold">{t}</span>
    <Chevron down c="#666666" />
  </div>
);
const Dialog = () => (
  <div className="absolute left-[365px] top-0 w-[307px] h-[860px] flex flex-col bg-[#e8e8e8] border-x border-[#555555] rounded-t-[4px] z-10">
    <div className="h-[22px] flex items-center bg-[#161616] rounded-t-[4px] text-white shrink-0">
      <div className="w-[21px] h-full flex items-center justify-center border-r border-[#777777]"><Settings size={14} strokeWidth={3} /></div>
      <div className="flex-1 pl-[8px] pb-[2px] flex items-center font-bold whitespace-nowrap">
        <span className="text-[14px]">定心钻</span>
        <span className="font-['Liberation_Mono',monospace] text-[13px] ml-[5px]">-</span>
        <span className="font-['Liberation_Mono',monospace] text-[13px] ml-[11px]">[SPOT_DRILLING]</span>
      </div>
      <div className="w-[20px] h-full flex items-center justify-center border-l border-[#777777]">
        <svg width="12" height="12" viewBox="0 0 12 12"><path d="M1 1l10 10M11 1L1 11" stroke="#fff" strokeWidth="2.6" /></svg>
      </div>
    </div>
    <div className="h-[787px] mt-[4px] flex shrink-0 pl-[6px]">
      <div className="w-[276px] h-full overflow-hidden shrink-0">
        <Section title="几何体" h="h-[115px] pt-[8px]">
          <div className="flex items-start gap-[4px]"><Label t="几何体" /><Combo value="MCS-C" mono /><Btn n="dCube" /><Btn n="dWrench" /></div>
          <div className="flex items-start gap-[4px] mt-[4px]"><Label t="指定孔" center /><Btn n="dHoles" /><Btn n="dTorch" /></div>
          <div className="flex items-start gap-[4px] mt-[4px]"><Label t="指定顶面" center /><Btn n="dTop" /><Btn n="dTorchG" off /></div>
        </Section>
        <Section title="工具" h="h-[98px] pt-[9px]">
          <div className="flex items-start gap-[4px]"><Label t="刀具" /><Combo value={<><Mono>ZT4.3</Mono><span className="ml-[6px] text-[12px]">(钻刀)</span></>} /><Btn n="dTool" /><Btn n="dWrenchT" /></div>
          <SubHead t="输出" />
          <SubHead t="换刀设置" />
        </Section>
        <Section title="刀轴" h="h-[71px] pt-[9px]">
          <div className="flex items-start gap-[4px]"><Label t="轴" /><Combo value="垂直于部件表面" w="w-[117px]" /><Btn n="dWrenchG" off /></div>
          <div className="flex items-center mt-[4px] text-[12px]">
            <div className="w-[16px] h-[16px] ml-[2px] rounded-[3px] border border-[#666666] bg-gradient-to-b from-[#bcd8f8] to-[#4a90e0] flex items-center justify-center">
              <svg width="11" height="10" viewBox="0 0 11 10"><path d="M1 5l3 3 6-7" fill="none" stroke="#0a2a70" strokeWidth="2.4" /></svg>
            </div>
            <span className="ml-[1px]">用圆弧的轴</span>
          </div>
        </Section>
        <Section title="循环类型" h="h-[71px] pt-[8px]">
          <div className="flex items-start gap-[4px]"><Label t="循环" /><Combo value="标准钻..." w="w-[117px]" /><Btn n="dWrench" /></div>
          <div className="flex items-center mt-[4px]">
            <div className="flex-1 text-[12px] pb-[2px]">最小安全距离</div>
            <div className="w-[64px] h-[19px] bg-white border border-[#666666] rounded-[3px] flex items-center justify-end pr-[3px] text-[#1a1a60]">
              <Mono t="tracking-[-0.2px]">3.0000</Mono>
            </div>
          </div>
        </Section>
        <Section title="刀轨设置" h="h-[116px] pt-[8px]">
          <div className="flex items-start gap-[4px]"><Label t="方法" /><Combo value="METHOD" mono /><Btn n="dWave" /><Btn n="dWrenchG" off /></div>
          <div className="flex items-start gap-[4px] mt-[4px]"><Label t="避让" center /><Btn n="dAvoid" blue /></div>
          <div className="flex items-start gap-[4px] mt-[4px]"><Label t="进给率和速度" center /><Btn n="dFeed" /></div>
        </Section>
        <Section title="机床控制" h="h-[82px] pt-[8px]">
          {['开始刀轨事件', '结束刀轨事件'].map((t, i) => (
            <div key={t} className={`flex items-start gap-[4px] ${i ? 'mt-[4px]' : ''}`}>
              <Label t={t} tight />
              <Btn n="dEvent" /><Btn n="dWrench" />
              <div className="w-[15px] h-[15px] mt-[2px] rounded-[2px] border border-[#aaaaaa] bg-[#dddddd] shrink-0" />
              <div className="w-0 -ml-[1px]" />
            </div>
          ))}
        </Section>
        <Section title="程序" h="h-[48px] pt-[8px]">
          <div className="flex items-start gap-[4px]"><Label t="程序" /><Combo value="NC_PROGRAM" mono /><Btn n="dProg" /><Btn n="dWrenchG" off /></div>
        </Section>
        <Section title="描述" h="h-[10px] pt-[7px]">
          <div className="h-[10px] rounded-t-[3px] border border-[#777777] bg-[#e0e0e0]" />
        </Section>
      </div>
      <div className="w-[15px] ml-[2px] h-[786px] flex flex-col shrink-0">
        <div className="h-[15px] mt-[1px] border border-[#aaaaaa] bg-gradient-to-b from-[#f4f4f4] to-[#d0d0d0] flex items-center justify-center shrink-0">
          <div className="w-0 h-0 border-x-[3px] border-x-transparent border-b-[3px] border-b-[#333333]" />
        </div>
        <div className="h-[575px] mt-[3px] border border-[#bbbbbb] rounded-[2px] bg-gradient-to-r from-[#eeeeee] to-[#d8d8d8] flex items-center justify-center shrink-0 relative">
          <svg width="8" height="8" viewBox="0 0 8 8"><path d="M0 1h8M0 4h8M0 7h8" stroke="#666" /></svg>
        </div>
        <div className="flex-1 bg-[#e4e4e4]" />
        <div className="h-[15px] border border-[#aaaaaa] bg-gradient-to-b from-[#f4f4f4] to-[#d0d0d0] flex items-center justify-center shrink-0">
          <div className="w-0 h-0 border-x-[3px] border-x-transparent border-t-[3px] border-t-[#333333]" />
        </div>
      </div>
    </div>
    <div className="mx-[6px] mt-[3px] border-t border-[#bbbbbb] shrink-0" />
    <div className="h-[17px] mt-[5px] flex justify-end gap-[7px] pr-[16px] text-[12px] shrink-0">
      <div className="w-[52px] h-full rounded-[3px] border border-[#555555] bg-gradient-to-b from-[#c0f0a8] to-[#5cc050] flex items-center justify-center">确定</div>
      <div className="w-[52px] h-full rounded-[3px] border border-[#555555] bg-gradient-to-b from-[#f8f8f8] to-[#c8c8c8] flex items-center justify-center">取消</div>
    </div>
    <div className="flex-1" />
    <div className="h-[8px] bg-[#141414] rounded-b-[3px] -mx-[1px] shrink-0" />
  </div>
);

// the part in the graphics window, coordinates taken at 3x around (760,290)
const holes = [
  [256, 150, 28], [322, 171, 19], [437, 163, 19], [550, 155, 19], [611, 125, 28], [1054, 340, 28], [1072, 409, 19],
  [1140, 505, 19], [1207, 602, 19], [1264, 641, 28], [484, 618, 19], [349, 700, 26], [635, 680, 26], [398, 769, 26],
  [600, 754, 26], [285, 827, 22], [725, 796, 22], [722, 927, 26], [424, 1201, 19], [546, 1198, 22],
];
const PartView = () => (
  <svg viewBox="672 173 768 624" className="w-full h-full block">
    <defs>
      <linearGradient id="hole" x1="0" y1="0" x2="0" y2="1">
        <stop offset="0" stopColor="#8f8f8f" />
        <stop offset=".55" stopColor="#ededed" />
        <stop offset="1" stopColor="#ffffff" />
      </linearGradient>
      <linearGradient id="bore" x1="0" y1="0" x2="1" y2="1">
        <stop offset="0" stopColor="#7f7f7f" />
        <stop offset=".5" stopColor="#f0f0f0" />
        <stop offset="1" stopColor="#a8a8a8" />
      </linearGradient>
      <linearGradient id="edge" x1="0" y1="0" x2="1" y2="0">
        <stop offset="0" stopColor="#dadada" />
        <stop offset="1" stopColor="#8c8c8c" />
      </linearGradient>
      <clipPath id="boreClip"><circle cx="518" cy="941" r="161" /></clipPath>
    </defs>
    <g transform="translate(760 290) scale(.3333)">
      <path d="M195 85l55-35 450-32c30-4 50 25 40 55L700 245l248 120-30 40-266-130 40-175c3-40-32-45-37-45z" fill="#a8a8a8" />
      <path d="M195 85l55-35 450-32-45 37z" fill="#e6e6e6" />
      <path d="M655 55l45-37c30-4 50 25 42 52l-50 30c3-25-12-42-37-45z" fill="#f0f0f0" />
      <path d="M692 100l50-30-42 175-48 30z" fill="url(#edge)" />
      <path d="M652 275l48-30 248 120-30 40z" fill="#f8f8f8" />
      <path d="M1042 248l53-36c15-4 28 8 35 20l-45 30c-10-14-25-18-43-14z" fill="#eeeeee" />
      <path d="M1085 262l45-30 270 373-50 45z" fill="#0000f0" />
      <path d="M1350 650l50-45c12 30 0 50-50 85z" fill="#0000e0" />
      <path d="M1157 745l55-10 26 255-53 32z" fill="#0000f0" />
      <path d="M880 1075c10-25 25-35 55-33l-65 148-65 55z" fill="#a4a4a4" />
      <path d="M195 85l460-30c30 3 42 22 37 45l-40 175 266 130 102-140c12-17 28-22 45-18 10 3 15 8 20 15l265 388c14 20 8 38-10 45l-183 50 28 277-265 18c-25 2-38 12-45 30l-70 170c-12 25-30 35-60 35l-460 30c-50 2-85-25-90-70l-60-585c-2-20-10-38-20-50l-93-130 216-155-76-175c-6-20 0-35 23-45z" fill="#b4b4b4" />
      <g clipPath="url(#boreClip)">
        <circle cx="518" cy="941" r="161" fill="url(#bore)" />
        <circle cx="548" cy="918" r="140" fill="#24252a" />
      </g>
      <path d="M425 810A161 161 0 1 0 640 1046" fill="none" stroke="#555" strokeWidth="1.5" />
      <circle cx="437" cy="163" r="39" fill="none" stroke="#444" strokeWidth="3" />
      <circle cx="1140" cy="505" r="39" fill="none" stroke="#444" strokeWidth="3" />
      {holes.map(([x, y, r]) => (
        <circle key={`${x}-${y}`} cx={x} cy={y} r={r} fill="url(#hole)" stroke="#666" strokeWidth="1.5" />
      ))}
      <circle cx="804" cy="921" r="26" fill="#0000e8" />
      <path d="M798 897a26 26 0 0 1 30 34c-14 0-28-14-30-34z" fill="#f4f4f4" />
      <ellipse cx="815" cy="325" rx="30" ry="9" transform="rotate(25 815 325)" fill="#8e8e8e" />
      <ellipse cx="815" cy="310" rx="24" ry="7" transform="rotate(25 815 310)" fill="#8e8e8e" />
      <ellipse cx="1195" cy="880" rx="7" ry="30" fill="#dddddd" />
      <ellipse cx="1214" cy="865" rx="7" ry="28" fill="#dddddd" />
      <g fill="none" stroke="#f01010" strokeWidth="6" strokeDasharray="28 16">
        <path d="M205 325l5-20 26-3 4 12M170 335L85 398l-25 8 5 24" />
      </g>
      <g fill="none" stroke="#f01010" strokeWidth="5">
        <path d="M702 297l15-18 6 18M740 262l12 20 12-18 14 6M770 302h12" />
        <path d="M805 292l22 8M850 315l22 10M852 345l24 10M880 378c2-18 12-30 28-25" />
        <path d="M1172 815l12-30 12 30M1178 805h14M1196 775l22 3" />
        <path d="M1222 795v110M1232 915v60M1188 980c20 6 34-2 48-12l-2-30h-28" strokeDasharray="20 12" />
      </g>
      <path d="M518 940L488 680" stroke="#2e8b2e" strokeWidth="5" />
      <path d="M489 638l-9 58h23z" fill="#2e8b2e" />
      <path d="M518 940L270 958" stroke="#1c50e0" strokeWidth="5" />
      <path d="M216 962l58-14 2 24z" fill="#1c50e0" />
      <path d="M518 940l-58 44" stroke="#c03030" strokeWidth="4" />
      <circle cx="460" cy="983" r="11" fill="#c03030" />
      <text x="502" y="627" fontFamily="Liberation Sans" fontSize="36" fill="#3f9f3f">YM</text>
      <text x="214" y="1004" fontFamily="Liberation Sans" fontSize="36" fill="#3f6fe0">ZM</text>
      <text x="448" y="1022" fontFamily="Liberation Sans" fontSize="36" fill="#b83030">XM</text>
    </g>
    <path d="M672 741h14" stroke="#208a20" strokeWidth="1.5" />
    <path d="M690 741l-6-3v6z" fill="#208a20" />
    <text x="687" y="745" fontFamily="Liberation Sans" fontSize="11" fill="#208a20">Y</text>
    <path d="M672 745v22" stroke="#555" strokeWidth="2" />
  </svg>
);

const TaskBtn = ({ children, active }) => (
  <div className={`w-[60px] h-[39px] mt-[1px] flex items-center justify-center rounded-[3px] border border-white/60 shrink-0 ${active ? 'bg-gradient-to-b from-[#f3c0bc] to-[#e8a8a4]' : 'bg-gradient-to-b from-[#d2e4f4] to-[#a6c4e2]'}`}>
    {children}
  </div>
);

export default function App() {
  return (
    <div className="relative w-[1440px] h-[900px] overflow-hidden flex flex-col bg-[#e0e0e0] text-black font-['Noto_Sans_CJK_SC',sans-serif]">
      {/* title bar */}
      <div className="h-[26px] flex items-center bg-[#1a1a1a] border-t-[2px] border-[#454545] pb-[2px] text-white shrink-0 font-['Liberation_Sans','Noto_Sans_CJK_SC',sans-serif]">
        <div className="w-[23px] flex justify-center"><Ico n="nx" s={18} /></div>
        <div className="text-[13px] whitespace-nowrap">NX 10 - 加工 - [JT-SXB-3G.prt （修改的） ]</div>
        <div className="flex-1" />
        <div className="text-[12px] font-bold mr-[25px] tracking-[0.3px] scale-x-[1.1]">SIEMENS</div>
        <div className="flex gap-[3px] mr-[3px]">
          <TitleBtn><span className="w-[7px] h-[3px] mt-[8px] bg-white" /></TitleBtn>
          <TitleBtn><svg width="11" height="11" viewBox="0 0 11 11"><path d="M3 3V1h7v6H8M1 3.5h7v6.5H1z" fill="none" stroke="#fff" strokeWidth="1.3" /></svg></TitleBtn>
          <TitleBtn c="bg-gradient-to-b from-[#f08060] to-[#d83018]"><svg width="11" height="11" viewBox="0 0 11 11"><path d="M1 1l9 9M10 1l-9 9" stroke="#fff" strokeWidth="2.2" /></svg></TitleBtn>
        </div>
      </div>

      {/* menu bar */}
      <div className="h-[24px] flex items-center bg-[#e4e4e4] border-b border-[#c4c4c4] pb-[3px] shrink-0">
        <div className="w-[365px] flex items-center shrink-0 overflow-hidden">
          <Grip w="w-[8px]" />
          <div className="w-[21px] flex justify-center shrink-0"><Ico n="colBlue" s={18} /></div>
          {['文件 (F)', '编辑 (E)', '视图 (V)', '插入 (S)', '格式 (R)', '工具 (T)', '装配 (A)'].map((t) => <MenuItem key={t} t={t} />)}
        </div>
        <div className="w-[307px] shrink-0" />
        <div className="flex items-center">
          <MenuItem t={<Mono>59</Mono>} w="w-[22px]" />
          <MenuItem t="窗口 (O)" w="w-[56px]" />
          <MenuItem t={<><Mono>GC</Mono>工具箱</>} w="w-[60px]" />
          <MenuItem t="帮助 (H)" />
        </div>
        <div className="flex-1" />
        <div className="flex gap-[3px] mr-[4px]">
          <SmallBtn><span className="w-[6px] h-[2px] mt-[8px] bg-[#333333]" /></SmallBtn>
          <SmallBtn><svg width="10" height="10" viewBox="0 0 10 10"><path d="M3 3V1h6v5H7M1 3h6v6H1z" fill="none" stroke="currentColor" /></svg></SmallBtn>
          <SmallBtn off><svg width="10" height="10" viewBox="0 0 10 10"><path d="M1 1l8 8M9 1L1 9" stroke="currentColor" strokeWidth="2" /></svg></SmallBtn>
        </div>
      </div>

      {/* toolbars */}
      <ToolRow
        end="w-[394px]"
        left={<>
          <Grip w="w-[10px]" />
          <T n="nx" w="w-[24px]" />
          <div className="w-[31px] h-full flex items-center pl-[4px] text-[13px] shrink-0">启动</div>
          <Drop w="w-[9px]" />
          {run(['doc', 'folder', 'save'])}
          <Sep w="w-[7px]" />
          <T n="undo" w="w-[30px]" />
          <Drop w="w-[12px]" />
          <Sep w="w-[8px]" />
          <T n="colorBox" />
          <Drop />
          <Sep w="w-[6px]" />
          <T n="infoDia" />
          <Sep />
          <div className="w-[120px] h-[22px] self-center mt-[3px] ml-[3px] bg-white border border-[#aaaaaa] rounded-[2px] text-[12px] leading-[20px] text-[#a8a8a8] pl-[2px] shrink-0">查找命令</div>
        </>}
        right={<>
          <div className="w-[4px] h-[24px] self-center bg-black shrink-0" />
          <Drop w="w-[14px]" />
          <Sep w="w-[6px]" />
          <T n="door" w="w-[40px]" />
          <T n="door2" w="w-[22px]" />
          <Drop w="w-[12px]" low />
          <Sep w="w-[8px]" />
          <Grip w="w-[4px]" />
          <T n="listDoc" w="w-[28px]" />
          <T n="netCube" w="w-[31px]" />
          <Drop w="w-[12px]" />
          <Sep w="w-[6px]" />
          <T n="handDia" w="w-[30px]" />
          <T n="palette" />
          <Sep w="w-[6px]" />
          <T n="triDia" w="w-[28px]" />
          <Drop w="w-[12px]" />
          <Sep w="w-[6px]" />
          <T n="hatch" w="w-[28px]" />
          <Drop w="w-[12px]" />
          <T n="ruler" w="w-[30px]" />
          <Drop w="w-[10px]" low />
        </>}
      />
      <ToolRow
        left={<>
          <Grip />
          {run(['colW', 'colS', 'colC', 'colC', 'clip', 'colX', 'colI', 'torch'])}
          <Drop low />
          <Sep />
          <Grip w="w-[6px]" />
          {run(['colBlue', 'sPath', 'checkBox'])}
        </>}
        right={<>
          <T n="gStack" w="w-[25px]" />
          <div className="w-[18px] shrink-0" />
          <div className="w-[14px] h-full flex flex-col items-center justify-between pt-[3px] pb-[7px] shrink-0">
            <span className="text-[11px] leading-[12px] font-bold">»</span>
            <Tri />
          </div>
          <Sep w="w-[4px]" />
          <Grip w="w-[9px]" />
          {run(['toolY', 'gBoxCyl', 'gTorchDoc', 'gBoxDoc', 'gFit', 'gLadder'])}
          <Drop low />
          <Sep w="w-[5px]" />
          <Grip w="w-[9px]" />
          <T n="target" />
          <T n="holder" w="w-[30px]" />
          <Drop />
          <T n="holderB" w="w-[32px]" />
          <Drop w="w-[13px]" />
          <T n="cylS" />
          <Drop />
          <Drop w="w-[12px]" low />
          <Sep w="w-[5px]" />
          <Grip />
          {run(['gT1', 'gT2'])}
          <Sep w="w-[4px]" />
          {run(['gBino', 'gPlus', 'gRing', 'gCyl', 'gBx'])}
          <Sep />
          <T n="gSpark" />
          <Sep />
          <T n="gX" />
          <Drop w="w-[11px]" low />
        </>}
      />
      <ToolRow
        end="w-[603px]"
        left={<>
          <Grip />
          {run(['pnc', 'gMail', 'gDocTree', 'gBar', 'gMachine', 'gMirror', 'gBear', 'gStamp', 'colW', 'gT12', 'gArr', 'gAxes'])}
        </>}
        right={<>
          <T n="cubeMove" />
          <Drop w="w-[12px]" />
          <T n="cubeTri" />
          <Drop w="w-[12px]" />
          <T n="cubeX" />
          <T n="cubeDoc" w="w-[28px]" />
          <Drop w="w-[13px]" />
          <T n="cubeSq" />
          <Drop w="w-[14px]" />
          <T n="cubeH" />
          <Drop w="w-[12px]" />
          <T n="cubeF" w="w-[29px]" />
          <T n="cubeTri" w="w-[32px]" />
          <T n="cubeMove" />
          <Drop w="w-[12px]" />
          <Drop w="w-[12px]" low />
          <Sep w="w-[4px]" />
          <Grip w="w-[7px]" />
          {run(['line', 'arcL', 'spline', 'heart', 'curveA', 'sheet', 'sheet2'])}
          <Drop w="w-[11px]" low />
        </>}
      />

      {/* status line */}
      <div className="h-[21px] flex items-center bg-[#e2e2e2] border-b border-[#aaaaaa] shrink-0">
        <div className="w-[672px] pl-[3px] pb-[2px] text-[13px] font-bold shrink-0">指定参数</div>
        <div className="flex-1 pl-[12px] pb-[2px] flex items-center font-bold">
          <span className="text-[13px]">当前：</span>
          <span className="font-['Liberation_Mono',monospace] text-[12px] -ml-[7px]">SPOT_DRILLING</span>
        </div>
        <div className="w-[77px] h-full border-l border-[#bbbbbb] flex items-center pl-[21px]">
          <svg width="16" height="16" viewBox="0 0 16 16"><path d="M1 4V1h3M12 1h3v3M1 12v3h3M12 15h3v-3" fill="none" stroke="#666" /><rect x="4" y="3" width="8" height="10" fill="#fff" stroke="#345" /><rect x="5" y="6" width="6" height="5" fill="#2a70d0" /></svg>
        </div>
      </div>

      {/* main area */}
      <div className="h-[624px] flex shrink-0">
        <div className="w-[31px] h-full flex flex-col bg-[#a8a8a8] border-r border-[#888888] shrink-0">
          <div className="h-[30px] bg-[#c4c4c4] flex items-center justify-center shrink-0 text-[#222222]">
            <Settings size={16} strokeWidth={2.4} />
          </div>
          <div className="h-[15px] shrink-0" />
          <Tab n="tGeom" />
          <div className="h-[3px] shrink-0" />
          <Tab n="tMach" h="h-[39px]" />
          <div className="h-[3px] shrink-0" />
          <Tab n="tPart" h="h-[39px]" />
          <Tab n="tOp" h="h-[44px]" active />
          <Tab n="tSheet" h="h-[41px]" />
          <div className="h-[2px] shrink-0" />
          <Tab n="tCam" h="h-[39px]" />
          <div className="h-[3px] shrink-0" />
          <Tab n="tBooks" h="h-[39px]" />
          <div className="h-[15px] shrink-0" />
          <Tab n="tInfo" h="h-[39px]" />
          <div className="h-[15px] shrink-0" />
          <Tab n="tWeb" h="h-[39px]" />
          <div className="h-[14px] shrink-0" />
          <Tab n="tClock" />
          <div className="h-[3px] shrink-0" />
          <Tab n="tGrad" h="h-[39px]" />
          <div className="h-[3px] shrink-0" />
          <Tab h="h-[10px]" />
          <div className="h-[6px] shrink-0" />
          <PageBtn><svg width="9" height="9" viewBox="0 0 9 9"><path d="M0 1h9M4.5 3L1 8h7z" fill="#aaa" stroke="#aaa" /></svg></PageBtn>
          <div className="h-[1px] shrink-0" />
          <PageBtn><svg width="9" height="9" viewBox="0 0 9 9"><path d="M4.5 2L1 7h7z" fill="#aaa" /></svg></PageBtn>
          <div className="h-[1px] shrink-0" />
          <PageBtn><svg width="9" height="9" viewBox="0 0 9 9"><path d="M4.5 7L1 2h7z" fill="#333" /></svg></PageBtn>
          <div className="h-[1px] shrink-0" />
          <PageBtn><svg width="9" height="9" viewBox="0 0 9 9"><path d="M0 8h9M4.5 6L1 1h7z" fill="#333" stroke="#333" /></svg></PageBtn>
        </div>

        <div className="w-[641px] h-full flex flex-col bg-[#f0f0f0] shrink-0 overflow-hidden">
          <div className="h-[31px] pl-[12px] flex items-center text-[13px] font-bold shrink-0 whitespace-nowrap">
            <span>工序导航器</span>
            <span className="ml-[8px]">-</span>
            <span className="ml-[9px]">几何</span>
          </div>
          <div className="h-[576px] ml-[7px] border-2 border-r-0 border-[#808080] flex flex-col overflow-hidden shrink-0">
            <div className="h-[16px] flex bg-gradient-to-b from-[#f0f0f0] to-[#dcdcdc] text-[12px] leading-[16px] border-b border-[#cccccc] shrink-0">
              <div className="w-[136px] pl-[6px] border-r border-[#bbbbbb] shrink-0">名称</div>
              <div className="w-[36px] pl-[6px] border-r border-[#bbbbbb] shrink-0 whitespace-nowrap">刀轨</div>
              <div className="w-[73px] pl-[6px] border-r border-[#bbbbbb] shrink-0">刀具</div>
              <div className="w-[36px] pl-[6px] border-r border-[#bbbbbb] shrink-0">刀..</div>
              <div className="flex-1 pl-[6px]">时间</div>
            </div>
            <div className="flex-1 overflow-hidden bg-white">
              {navRows.map((r, i) => <NavRow key={i} idx={i} head={r.head} time={r.time} />)}
              {ops.map((o, i) => (
                <NavRow key={i} idx={i + 6} name={o[0]} status={o[1]} op={o[2]} tool={o[3]} num={o[4]} time={o[5]} sel={i === ops.length - 1} />
              ))}
              {[22, 23, 24, 25, 26, 27].map((i) => <NavRow key={i} idx={i} />)}
            </div>
          </div>
          <div className="h-[7px] mt-[2px] ml-[7px] flex shrink-0">
            <div className="w-[219px] h-[1px] mt-[2px] bg-[#bbbbbb]" />
            <div className="w-[100px] ml-[5px] h-[6px] bg-[#dddddd] border border-[#aaaaaa]" />
          </div>
        </div>

        <div className="flex-1 h-full bg-[#24252a] overflow-hidden">
          <PartView />
        </div>
      </div>

      {/* bottom toolbars */}
      <div className="h-[33px] flex bg-gradient-to-b from-[#e8e8e8] to-[#d4d4d4] border-t-2 border-[#b0b0b0] border-b border-b-[#999999] shrink-0">
        <Grip />
        <T n="gFam1" w="w-[28px]" />
        <T n="gFam2" w="w-[33px]" />
        <T n="gFam3" w="w-[29px]" />
        <T n="gFam4" w="w-[30px]" />
        <Drop w="w-[9px]" low />
        <Sep w="w-[8px]" />
        <Grip w="w-[6px]" />
        <T n="rainbow" />
        <Drop w="w-[10px]" />
        <T n="gPlusBig" w="w-[33px]" />
        <Drop w="w-[11px]" />
        <T n="gArrowPlate" w="w-[32px]" />
        <Drop w="w-[11px]" />
        <T n="gDrum" w="w-[31px]" />
        <T n="blueCube" w="w-[29px]" />
        <T n="gCubeBig" w="w-[31px]" />
        <div className="flex-1" />
        <div className="w-[10px] bg-[#c8c8c8]" />
      </div>
      <div className="h-[30px] flex items-center bg-gradient-to-b from-[#e4e4e4] to-[#d2d2d2] shrink-0">
        <div className="w-[113px] h-[17px] ml-[6px] rounded-[4px] border border-[#aaaaaa] bg-[#d0d0d0] flex justify-end shrink-0">
          <div className="w-[16px] h-full border-l border-[#aaaaaa] bg-[#e8e8e8] flex items-center justify-center">
            <div className="w-0 h-0 border-x-[5px] border-x-transparent border-t-[5px] border-t-[#aaaaaa]" />
          </div>
        </div>
        <div className="w-[120px] h-[17px] ml-[8px] rounded-[4px] border border-[#aaaaaa] bg-[#d0d0d0] flex items-center shrink-0">
          <div className="flex-1 pl-[2px] text-[12px] text-[#aaaaaa]">整个装配</div>
          <div className="w-[16px] h-full border-l border-[#aaaaaa] bg-[#e8e8e8] flex items-center justify-center">
            <div className="w-0 h-0 border-x-[5px] border-x-transparent border-t-[5px] border-t-[#aaaaaa]" />
          </div>
        </div>
        <div className="ml-[8px]"><Ico n="gChain" s={18} /></div>
        <Sep w="w-[14px]" />
        <Ico n="gFunnel" s={18} />
        <div className="ml-[3px]"><Ico n="redFilter" s={17} /></div>
        <Drop w="w-[16px]" />
        <div className="ml-[1px]"><Ico n="gUndoT" s={18} /></div>
        <div className="flex-1" />
        <div className="w-[10px] h-full flex items-end justify-center pb-[4px] bg-[#c4c4c4]"><Tri /></div>
      </div>

      {/* taskbar */}
      <div className="h-[40px] flex shrink-0 bg-[#b0cde9]">
        <div className="w-[59px] h-full bg-[#8fa7bf] flex items-center justify-center shrink-0">
          <svg width="38" height="38" viewBox="0 0 38 38">
            <circle cx="19" cy="19" r="18" fill="#1f5f8a" stroke="#0a2a44" />
            <path d="M2 17C6 4 32 4 36 17c-8 5-28 5-34 0z" fill="#8fc8e8" fillOpacity=".45" />
            <path d="M10 12c3 1 5 1 8 0v7c-3 1-5 1-8 0z" fill="#e8502a" />
            <path d="M20 11c3 1 5 1 8 0v7c-3 1-5 1-8 0z" fill="#7cc030" />
            <path d="M10 21c3 1 5 1 8 0v7c-3 1-5 1-8 0z" fill="#2a9ae0" />
            <path d="M20 20c3 1 5 1 8 0v7c-3 1-5 1-8 0z" fill="#f8c020" />
          </svg>
        </div>
        <div className="flex gap-[2px] shrink-0">
          <TaskBtn><Ico n="nx" s={32} /></TaskBtn>
          <TaskBtn active>
            <div className="w-[32px] h-[32px] bg-[#e86058] flex items-center justify-center">
              <svg width="24" height="24" viewBox="0 0 24 24"><path d="M12 1L3 22h5l4-8 4 8h5z" fill="#8a1810" /><path d="M12 8l-3 8h6z" fill="#e86058" /></svg>
            </div>
          </TaskBtn>
          <TaskBtn>
            <div className="w-[28px] h-[28px] rounded-[5px] bg-[#1f80f0] flex items-center justify-center">
              <svg width="20" height="14" viewBox="0 0 20 14"><path d="M1 2l4 10 5-8 5 8 4-10" fill="none" stroke="#fff" strokeWidth="2.4" /></svg>
            </div>
          </TaskBtn>
          <TaskBtn>
            <div className="relative w-[28px] h-[28px] rounded-full bg-[#3ab030] flex items-center justify-center text-white text-[24px] leading-none font-bold font-['Liberation_Sans',sans-serif]">e</div>
          </TaskBtn>
          <TaskBtn>
            <svg width="32" height="30" viewBox="0 0 32 30"><path d="M2 5h12l2 3h14v20H2z" fill="#f0d890" stroke="#b09a50" /><rect x="5" y="2" width="20" height="8" fill="#f8f8f8" stroke="#aaa" /><path d="M2 12h28v16H2z" fill="#f8e4a0" /><path d="M10 28v-8h12v8" fill="#8fcce8" stroke="#4a90c0" /></svg>
          </TaskBtn>
        </div>
        <div className="flex-1" />
        <div className="w-[340px] h-full flex items-center bg-gradient-to-r from-[#b0cde9] via-[#8aa1bc] via-[10%] to-[#8aa1bc] text-white shrink-0">
          <Mono className="ml-[33px]">CH</Mono>
          <div className="ml-[8px] w-[16px] h-[16px] rounded-[3px] bg-[#f04e12] flex items-center justify-center text-[14px] leading-none font-bold font-['Liberation_Sans',sans-serif]">S</div>
          <div className="ml-[5px] flex flex-col items-center w-[10px]">
            <div className="w-[9px] h-[7px] border border-[#6fb4e8]" />
            <div className="mt-[4px] w-0 h-0 border-x-[3px] border-x-transparent border-t-[3px] border-t-white" />
          </div>
          <div className="ml-[25px] w-[50px] flex flex-col items-center text-[12px] leading-[16px]">
            <span>39℃</span>
            <span className="whitespace-nowrap">CPU温度</span>
          </div>
          <div className="ml-[24px] w-0 h-0 border-x-[4px] border-x-transparent border-b-[4px] border-b-white" />
          <svg className="ml-[10px]" width="18" height="18" viewBox="0 0 18 18"><rect x="4" y="3" width="13" height="10" fill="#6a7a90" stroke="#fff" /><path d="M2 1v6h4V1M4 7v10M6 17h10" stroke="#fff" fill="none" /></svg>
          <svg className="ml-[7px]" width="16" height="16" viewBox="0 0 16 16"><path d="M1 5h3l4-4v14l-4-4H1z" fill="#eee" /><path d="M10 5c1 2 1 4 0 6M12 3c2 3 2 7 0 10" stroke="#fff" fill="none" /></svg>
          <div className="ml-[16px] w-[60px] flex flex-col items-center text-[12px] leading-[16px]">
            <span>9:48</span>
            <span className="whitespace-nowrap">2020/6/21</span>
          </div>
          <div className="ml-[8px] w-[14px] h-full bg-gradient-to-b from-[#c4d4e4] to-[#8aa6c6] border-x border-white/40" />
        </div>
      </div>

      <Dialog />

      {/* site watermark over the bottom right corner */}
      <div className="absolute left-[1157px] top-[805px] w-[283px] h-[90px] z-20 pointer-events-none">
        <svg width="72" height="82" viewBox="0 0 72 82" className="absolute left-0 top-0">
          <path d="M36 0l35 20v42L36 82 1 62V20z" fill="#3a9fdc" fillOpacity=".55" />
          <path d="M36 18l20 11v23L36 63 16 52V29z" fill="#9ccbe6" fillOpacity=".5" stroke="#c8c8c8" strokeOpacity=".7" strokeWidth="3" />
          <path d="M36 40l20-11v23L36 63z" fill="#3a9fdc" fillOpacity=".6" />
        </svg>
        <div className="absolute left-[80px] top-[8px] text-[43px] leading-[48px] font-bold text-white/40 whitespace-nowrap font-['Liberation_Sans','Noto_Sans_CJK_SC',sans-serif]">3D世界网</div>
        <div className="absolute left-[84px] top-[56px] text-[14px] leading-[16px] font-bold tracking-[3px] text-white/35 whitespace-nowrap font-['Liberation_Sans',sans-serif]">WWW.3DSJW.COM</div>
      </div>
    </div>
  );
}
